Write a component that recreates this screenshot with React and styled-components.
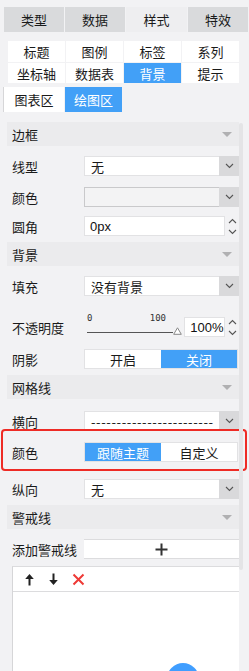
import React from "react";
import styled, { createGlobalStyle } from "styled-components";

const Global = createGlobalStyle`
  html, body { margin: 0; padding: 0; background: #f2f2f4; }
  body { font-family: "Noto Sans CJK SC", "Noto Sans", sans-serif; color: #1a1a1a; width: 249px; height: 671px; overflow: hidden; }
  * { box-sizing: border-box; }
`;

const Page = styled.div`
  position: relative;
  width: 249px;
  height: 671px;
  padding-top: 7px;
`;

const TopTabs = styled.div`
  display: grid;
  grid-template-columns: 60px 60px 61px 60px;
  column-gap: 1px;
  margin-left: 4px;
  height: 25px;
`;

const TopTab = styled.div`
  display: flex;
  align-items: center;
  justify-content: center;
  font-size: 13px;
  background: ${(p) => (p.$active ? "#eeeef0" : "#d9dadc")};
  color: #1a1a1a;
`;

const SubTabs = styled.div`
  display: grid;
  grid-template-columns: repeat(4, 57px);
  grid-template-rows: 21px 20px;
  gap: 1px;
  margin: 9px 0 0 8px;
`;

const SubTab = styled.div`
  display: flex;
  align-items: center;
  justify-content: center;
  font-size: 13px;
  background: ${(p) => (p.$active ? "#42a0f7" : "#ffffff")};
  color: ${(p) => (p.$active ? "#ffffff" : "#1a1a1a")};
`;

const AreaTabs = styled.div`
  display: flex;
  margin: 4px 0 0 3px;
  height: 25px;
  gap: 1px;
`;

const AreaTab = styled.div`
  width: ${(p) => p.$w}px;
  display: flex;
  align-items: center;
  justify-content: center;
  font-size: 13px;
  background: ${(p) => (p.$active ? "#42a0f7" : "#ffffff")};
  color: ${(p) => (p.$active ? "#ffffff" : "#1a1a1a")};
  border-left: ${(p) => (p.$active ? "none" : "1px solid #d6d6d8")};
`;

const Panel = styled.div`
  margin: 10px 0 0 7px;
  width: 232px;
`;

const SectionHeader = styled.div`
  display: flex;
  align-items: center;
  justify-content: space-between;
  height: 24px;
  margin-top: ${(p) => p.$mt || 0}px;
  padding: 0 7px 0 5px;
  background: #ebebed;
  font-size: 13px;
  color: #1a1a1a;
`;

const Caret = styled.span`
  width: 0;
  height: 0;
  border-left: 5px solid transparent;
  border-right: 5px solid transparent;
  border-top: 5px solid #b0b0b2;
`;

const Row = styled.div`
  display: flex;
  align-items: center;
  margin-top: ${(p) => p.$mt || 0}px;
  height: ${(p) => p.$h || 20}px;
`;

const Label = styled.div`
  width: 77px;
  padding-left: 5px;
  font-size: 13px;
  color: #1a1a1a;
  flex-shrink: 0;
  white-space: nowrap;
`;

const Select = styled.div`
  display: flex;
  width: 155px;
  height: 20px;
`;

const SelectValue = styled.div`
  flex: 1;
  display: flex;
  align-items: center;
  padding-left: 6px;
  font-size: 13px;
  background: ${(p) => (p.$color ? "#f3f3f4" : "#ffffff")};
  border: 1px solid ${(p) => (p.$color ? "#c9c9cb" : "#e2e2e4")};
  border-right: none;
  overflow: hidden;
  white-space: nowrap;
  letter-spacing: ${(p) => (p.$dash ? "0.6px" : "normal")};
`;

const SelectArrow = styled.div`
  width: 20px;
  display: flex;
  align-items: center;
  justify-content: center;
  background: #d9d9db;
`;

const NumberInput = styled.div`
  display: flex;
  align-items: center;
  width: ${(p) => p.$w}px;
  height: 20px;
  padding-left: 5px;
  background: #ffffff;
  border: 1px solid #e2e2e4;
  font-family: "Liberation Sans", Arial, sans-serif;
  font-size: 13px;
  color: #111;
`;

const Spinner = styled.div`
  width: 13px;
  height: 20px;
  margin-left: ${(p) => p.$ml || 1}px;
  display: flex;
  flex-direction: column;
  align-items: center;
  justify-content: space-between;
  padding: 2px 0 1px;
`;

const SliderWrap = styled.div`
  position: relative;
  width: 101px;
  height: 24px;
  display: flex;
  flex-direction: column;
  margin-top: -4px;
`;

const SliderTicks = styled.div`
  display: flex;
  justify-content: space-between;
  width: 82px;
  padding-left: 3px;
  font-family: "DejaVu Sans Mono", monospace;
  font-size: 9px;
  line-height: 10px;
  color: #333;
`;

const SliderTrack = styled.div`
  display: flex;
  align-items: flex-end;
  margin-top: 4px;
  padding-left: 3px;
`;

const SliderLine = styled.div`
  width: 86px;
  height: 1px;
  background: #555;
  margin-bottom: 2px;
`;

const Toggle = styled.div`
  display: flex;
  width: 154px;
  height: 20px;
  border: 1px solid #e2e2e4;
  background: #fff;
`;

const ToggleBtn = styled.div`
  flex: 1;
  display: flex;
  align-items: center;
  justify-content: center;
  font-size: 13px;
  background: ${(p) => (p.$active ? "#42a0f7" : "#ffffff")};
  color: ${(p) => (p.$active ? "#ffffff" : "#1a1a1a")};
`;

const Highlight = styled.div`
  position: relative;
  &::before {
    content: "";
    position: absolute;
    left: -6px;
    right: -8px;
    top: -13px;
    bottom: -9px;
    border: 2px solid #ee2b25;
    border-radius: 4px;
    pointer-events: none;
  }
`;

const AddButton = styled.div`
  width: 155px;
  height: 20px;
  display: flex;
  align-items: center;
  justify-content: center;
  background: #fff;
  border-top: 1px solid #dcdcde;
  border-bottom: 1px solid #dcdcde;
`;

const ListBox = styled.div`
  margin: 7px 0 0 5px;
  width: 227px;
  height: 120px;
  background: #fff;
  border-left: 1px solid #d6d6d8;
  border-top: 1px solid #dcdcde;
`;

const ListToolbar = styled.div`
  display: flex;
  align-items: center;
  gap: 13px;
  height: 25px;
  padding-left: 11px;
  border-bottom: 1px solid #dcdcde;
`;

const ScrollThumb = styled.div`
  position: absolute;
  left: 239px;
  top: 123px;
  width: 4px;
  height: 447px;
  border-radius: 2px;
  background: #e4e4e6;
`;

const Fab = styled.div`
  position: absolute;
  left: 167px;
  top: 663px;
  width: 32px;
  height: 32px;
  border-radius: 50%;
  background: #409eff;
`;

const Chevron = ({ up }) => (
  <svg width="9" height="6" viewBox="0 0 9 6">
    <path d={up ? "M1 5 L4.5 1.5 L8 5" : "M1 1 L4.5 4.5 L8 1"} fill="none" stroke="#555" strokeWidth="1.1" />
  </svg>
);

const SpinnerIcons = ({ ml }) => (
  <Spinner $ml={ml}>
    <Chevron up />
    <Chevron />
  </Spinner>
);

const Arrow = () => (
  <SelectArrow>
    <Chevron />
  </SelectArrow>
);

const Slider = () => (
  <SliderWrap>
    <SliderTicks>
      <span>0</span>
      <span>100</span>
    </SliderTicks>
    <SliderTrack>
      <SliderLine />
      <svg width="9" height="8" viewBox="0 0 9 8">
        <path d="M4.5 0.8 L8.3 7.3 L0.7 7.3 Z" fill="#fff" stroke="#888" strokeWidth="1" />
      </svg>
    </SliderTrack>
  </SliderWrap>
);

export default function App() {
  return (
    <Page>
      <Global />
      <TopTabs>
        <TopTab>类型</TopTab>
        <TopTab>数据</TopTab>
        <TopTab $active>样式</TopTab>
        <TopTab>特效</TopTab>
      </TopTabs>
      <SubTabs>
        <SubTab>标题</SubTab>
        <SubTab>图例</SubTab>
        <SubTab>标签</SubTab>
        <SubTab>系列</SubTab>
        <SubTab>坐标轴</SubTab>
        <SubTab>数据表</SubTab>
        <SubTab $active>背景</SubTab>
        <SubTab>提示</SubTab>
      </SubTabs>
      <AreaTabs>
        <AreaTab $w={61}>图表区</AreaTab>
        <AreaTab $w={57} $active>绘图区</AreaTab>
      </AreaTabs>
      <Panel>
        <SectionHeader>
          边框
          <Caret />
        </SectionHeader>
        <Row $mt={10}>
          <Label>线型</Label>
          <Select>
            <SelectValue>无</SelectValue>
            <Arrow />
          </Select>
        </Row>
        <Row $mt={11}>
          <Label>颜色</Label>
          <Select>
            <SelectValue $color />
            <Arrow />
          </Select>
        </Row>
        <Row $mt={9}>
          <Label>圆角</Label>
          <NumberInput $w={142}>0px</NumberInput>
          <SpinnerIcons />
        </Row>
        <SectionHeader $mt={6}>
          背景
          <Caret />
        </SectionHeader>
        <Row $mt={10}>
          <Label>填充</Label>
          <Select>
            <SelectValue>没有背景</SelectValue>
            <Arrow />
          </Select>
        </Row>
        <Row $mt={21}>
          <Label>不透明度</Label>
          <Slider />
          <NumberInput $w={41}>100%</NumberInput>
          <SpinnerIcons />
        </Row>
        <Row $mt={12}>
          <Label>阴影</Label>
          <Toggle>
            <ToggleBtn>开启</ToggleBtn>
            <ToggleBtn $active>关闭</ToggleBtn>
          </Toggle>
        </Row>
        <SectionHeader $mt={6}>
          网格线
          <Caret />
        </SectionHeader>
        <Row $mt={12}>
          <Label>横向</Label>
          <Select>
            <SelectValue $dash>------------------------</SelectValue>
            <Arrow />
          </Select>
        </Row>
        <Highlight>
          <Row $mt={11}>
            <Label>颜色</Label>
            <Toggle>
              <ToggleBtn $active>跟随主题</ToggleBtn>
              <ToggleBtn>自定义</ToggleBtn>
            </Toggle>
          </Row>
        </Highlight>
        <Row $mt={17}>
          <Label>纵向</Label>
          <Select>
            <SelectValue>无</SelectValue>
            <Arrow />
          </Select>
        </Row>
        <SectionHeader $mt={6}>
          警戒线
          <Caret />
        </SectionHeader>
        <Row $mt={10}>
          <Label>添加警戒线</Label>
          <AddButton>
            <svg width="13" height="13" viewBox="0 0 13 13">
              <path d="M6.5 0.5 V12.5 M0.5 6.5 H12.5" stroke="#333" strokeWidth="2" />
            </svg>
          </AddButton>
        </Row>
        <ListBox>
          <ListToolbar>
            <svg width="11" height="13" viewBox="0 0 11 13">
              <path d="M5.5 1 L1.2 6 H4.5 V12.5 H6.5 V6 H9.8 Z" fill="#222" />
            </svg>
            <svg width="11" height="13" viewBox="0 0 11 13">
              <path d="M5.5 12 L1.2 7 H4.5 V0.5 H6.5 V7 H9.8 Z" fill="#222" />
            </svg>
            <svg width="13" height="13" viewBox="0 0 13 13">
              <path d="M1.5 1.5 L11.5 11.5 M11.5 1.5 L1.5 11.5" stroke="#ee3a36" strokeWidth="2" />
            </svg>
          </ListToolbar>
        </ListBox>
      </Panel>
      <ScrollThumb />
      <Fab />
    </Page>
  );
}
